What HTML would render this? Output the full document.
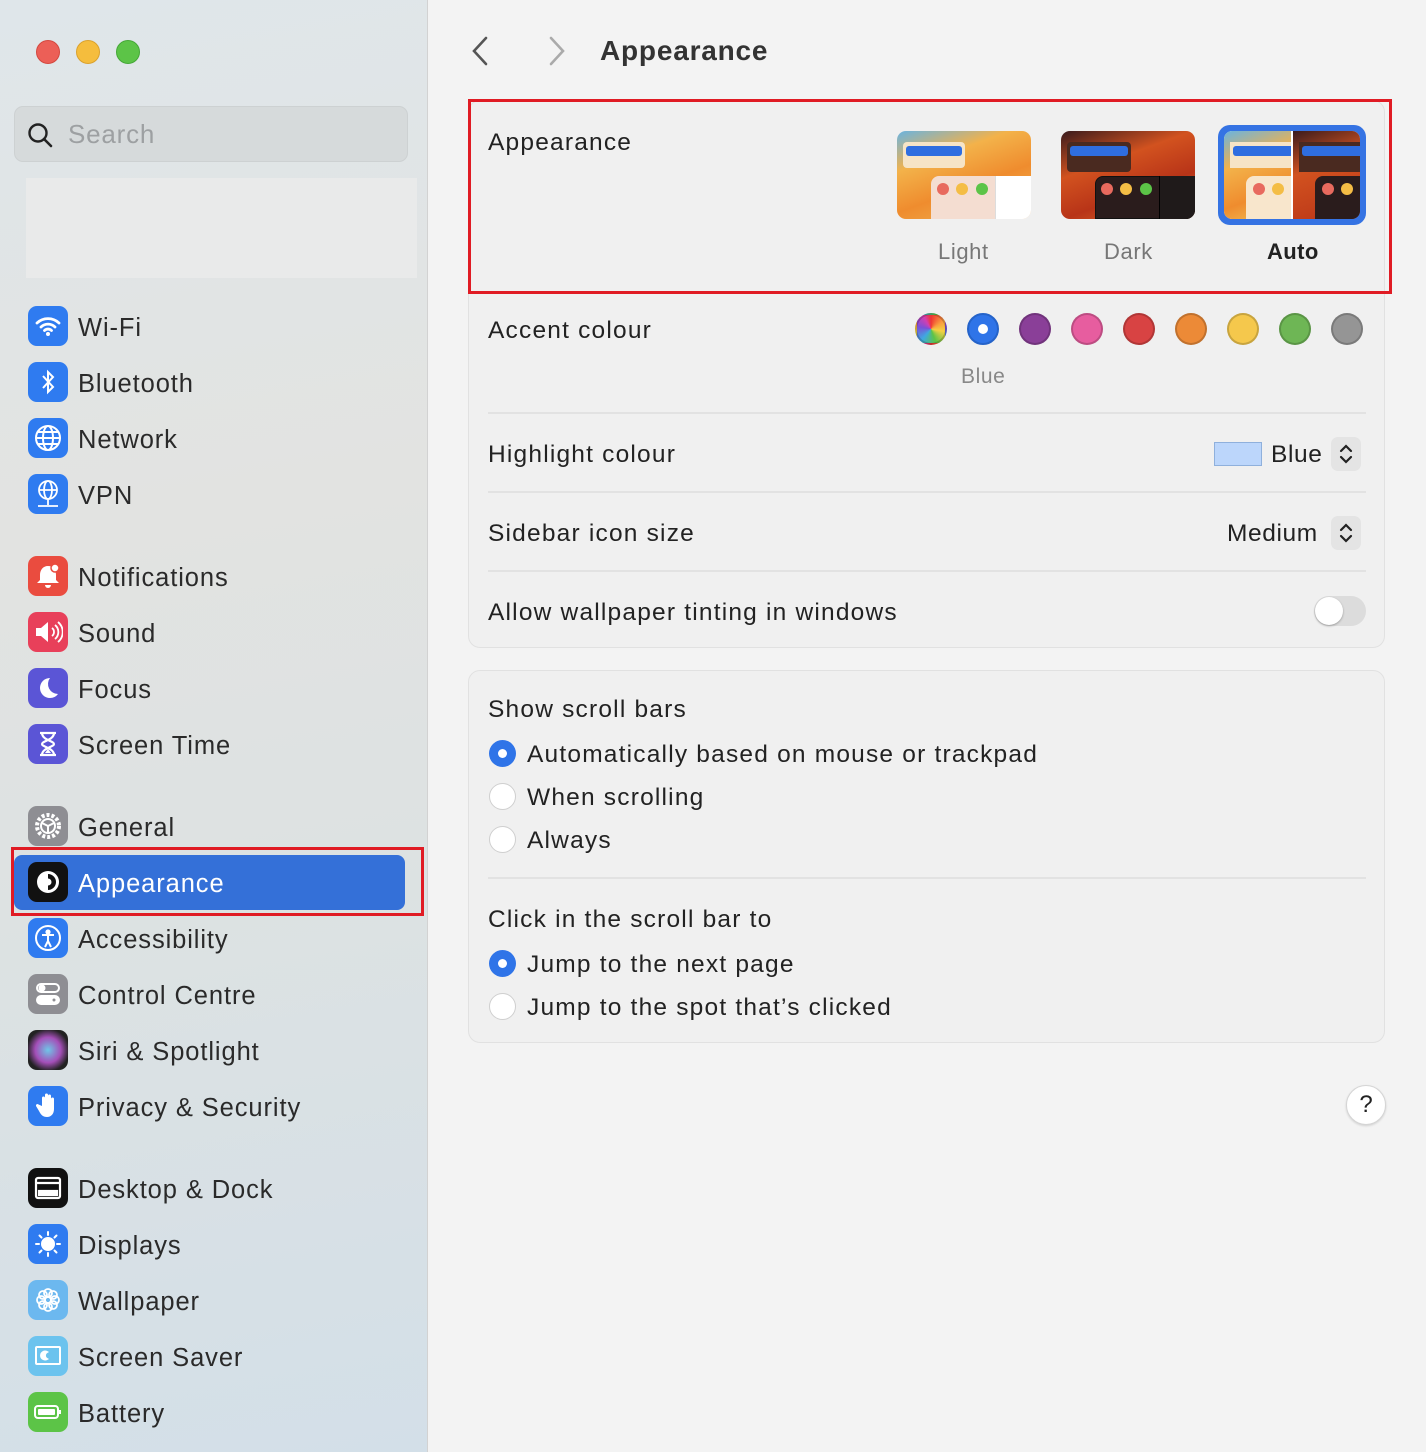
<!DOCTYPE html>
<html><head><meta charset="utf-8"><style>
*{margin:0;padding:0;box-sizing:border-box}
body{width:1426px;height:1452px;position:relative;overflow:hidden;font-family:"Liberation Sans",sans-serif;background:#f3f3f3;color:#222}
.a{position:absolute}
#side{left:0;top:0;width:428px;height:1452px;background:linear-gradient(170deg,#dfe6ea 0%,#e2e3e1 35%,#dde2e2 60%,#d3dfe8 100%);border-right:1px solid #d2d2d2}
.tl{width:24px;height:24px;border-radius:50%;top:40px}
.it{left:28px;width:40px;height:40px;border-radius:9px;display:flex;align-items:center;justify-content:center}
.lb{left:78px;font-size:25.5px;color:#2a2a2a;line-height:30px;letter-spacing:0.9px;margin-top:2px}
.t{font-size:24.5px;color:#222;line-height:30px;letter-spacing:1.2px;margin-top:2px}
.sep{height:2px;background:#e2e2e2;left:488px;width:878px}
.card{left:468px;width:917px;background:#f0f0f0;border:1px solid #e1e1e1;border-radius:12px}
.dot{width:32px;height:32px;border-radius:50%;top:313px;border:2px solid rgba(0,0,0,.18)}
.rad{left:489px;width:27px;height:27px;border-radius:50%;background:#fff;border:1px solid #cfcfcf}
.rad.on{background:#2f74e8;border:none}
.rad.on::after{content:"";position:absolute;left:9px;top:9px;width:9px;height:9px;border-radius:50%;background:#fff}
.step{width:30px;height:34px;border-radius:7px;background:#e4e4e4;display:flex;align-items:center;justify-content:center}
</style></head><body>
<div id="side" class="a"></div>
<div class="a tl" style="left:36px;background:#ec5f57;border:1px solid #d4483f"></div>
<div class="a tl" style="left:76px;background:#f5bd3d;border:1px solid #dba22d"></div>
<div class="a tl" style="left:116px;background:#5cc447;border:1px solid #45a837"></div>
<div class="a" style="left:14px;top:106px;width:394px;height:56px;border-radius:9px;background:#d6dadb;border:1px solid #cdd1d2"></div>
<svg class="a" style="left:26px;top:121px" width="28" height="28" viewBox="0 0 28 28"><circle cx="12" cy="12" r="8.5" fill="none" stroke="#222" stroke-width="2.4"/><path d="M18 18l7 7" stroke="#222" stroke-width="2.6" stroke-linecap="round"/></svg>
<div class="a" style="left:68px;top:119px;font-size:26px;color:#9da0a2;letter-spacing:0.8px">Search</div>
<div class="a" style="left:26px;top:178px;width:391px;height:100px;background:#e9eaea"></div>

<div class="a it" style="top:306px;background:#2f7bf0"><svg width="28" height="24" viewBox="0 0 28 24"><path d="M3 9a16 16 0 0122 0M7 13a10 10 0 0114 0M10.5 16.5a5 5 0 017 0" stroke="#fff" stroke-width="2.8" fill="none" stroke-linecap="round"/><circle cx="14" cy="20" r="2" fill="#fff"/></svg></div>
<div class="a lb" style="top:311px">Wi-Fi</div>
<div class="a it" style="top:362px;background:#2f7bf0"><svg width="20" height="26" viewBox="0 0 20 26"><path d="M5 7l10 11-5 5V3l5 5L5 19" stroke="#fff" stroke-width="2" fill="none"/></svg></div>
<div class="a lb" style="top:367px">Bluetooth</div>
<div class="a it" style="top:418px;background:#2f7bf0"><svg width="30" height="30" viewBox="0 0 30 30" fill="none" stroke="#fff" stroke-width="2"><circle cx="15" cy="15" r="12"/><ellipse cx="15" cy="15" rx="5" ry="12"/><path d="M3 15h24M5 9h20M5 21h20"/></svg></div>
<div class="a lb" style="top:423px">Network</div>
<div class="a it" style="top:474px;background:#2f7bf0"><svg width="30" height="32" viewBox="0 0 30 32" fill="none" stroke="#fff" stroke-width="1.8"><circle cx="15" cy="12" r="9"/><ellipse cx="15" cy="12" rx="4" ry="9"/><path d="M6 12h18M15 21v6M5 28h20"/></svg></div>
<div class="a lb" style="top:479px">VPN</div>

<div class="a it" style="top:556px;background:#ea4c3f"><svg width="28" height="28" viewBox="0 0 28 28"><path d="M14 4c-5 0-8 4-8 9v5l-3 3h22l-3-3v-5c0-5-3-9-8-9z" fill="#fff"/><circle cx="21" cy="6" r="4" fill="#fff" stroke="#ea4c3f" stroke-width="1.5"/><path d="M11 23a3 3 0 006 0" fill="#fff"/></svg></div>
<div class="a lb" style="top:561px">Notifications</div>
<div class="a it" style="top:612px;background:#e8405a"><svg width="30" height="26" viewBox="0 0 30 26"><path d="M3 9h5l7-6v20l-7-6H3z" fill="#fff"/><path d="M19 9a5 5 0 010 8M22 6a9 9 0 010 14M25 3a13 13 0 010 20" stroke="#fff" stroke-width="1.8" fill="none"/></svg></div>
<div class="a lb" style="top:617px">Sound</div>
<div class="a it" style="top:668px;background:#5b55d6"><svg width="26" height="26" viewBox="0 0 26 26"><path d="M15 3a10 10 0 100 20 10 10 0 008-4A10 10 0 0115 3z" fill="#fff"/></svg></div>
<div class="a lb" style="top:673px">Focus</div>
<div class="a it" style="top:724px;background:#5b55d6"><svg width="22" height="28" viewBox="0 0 22 28"><path d="M3 3h16M3 25h16M5 3c0 7 12 8 12 11S5 18 5 25h12c0-7-12-8-12-11S17 10 17 3" stroke="#fff" stroke-width="2.2" fill="none"/><path d="M8 23l3-4 3 4z" fill="#fff"/></svg></div>
<div class="a lb" style="top:729px">Screen Time</div>

<div class="a it" style="top:806px;background:#8e8e93"><svg width="32" height="32" viewBox="0 0 32 32" fill="none" stroke="#fff" stroke-width="2"><circle cx="16" cy="16" r="11" stroke-dasharray="3 2" stroke-width="4"/><circle cx="16" cy="16" r="7"/><path d="M16 16l-6-3M16 16l6-3M16 16v7"/></svg></div>
<div class="a lb" style="top:811px">General</div>
<div class="a" style="left:14px;top:855px;width:391px;height:55px;border-radius:8px;background:#3470d8"></div>
<div class="a" style="left:11px;top:847px;width:413px;height:69px;border:3px solid #e01b24"></div>
<div class="a it" style="top:862px;background:#111"><svg width="30" height="30" viewBox="0 0 30 30"><circle cx="15" cy="15" r="11" fill="#fff"/><path d="M15 7a8 8 0 010 16z" fill="#111"/><circle cx="15" cy="15" r="3.5" fill="#fff"/></svg></div>
<div class="a lb" style="top:867px;color:#fff">Appearance</div>
<div class="a it" style="top:918px;background:#2f7bf0"><svg width="30" height="30" viewBox="0 0 30 30" fill="none" stroke="#fff" stroke-width="2"><circle cx="15" cy="15" r="12"/><circle cx="15" cy="9" r="1.6" fill="#fff"/><path d="M9 12h12M15 12v6l-3 6M15 18l3 6"/></svg></div>
<div class="a lb" style="top:923px">Accessibility</div>
<div class="a it" style="top:974px;background:#8e8e93"><svg width="28" height="26" viewBox="0 0 28 26" fill="none" stroke="#fff" stroke-width="2"><rect x="3" y="3" width="22" height="8" rx="4"/><rect x="3" y="15" width="22" height="8" rx="4" fill="#fff"/><circle cx="8" cy="7" r="2.5" fill="#fff"/><circle cx="20" cy="19" r="2.5" fill="#8e8e93"/></svg></div>
<div class="a lb" style="top:979px">Control Centre</div>
<div class="a it" style="top:1030px;background:radial-gradient(circle,#6fc6e8 0%,#a44fb8 45%,#222 75%)"></div>
<div class="a lb" style="top:1035px">Siri &amp; Spotlight</div>
<div class="a it" style="top:1086px;background:#2f7bf0"><svg width="24" height="28" viewBox="0 0 24 28"><path d="M6 14V6a1.5 1.5 0 013 0v6V3a1.5 1.5 0 013 0v9V4a1.5 1.5 0 013 0v9V7a1.5 1.5 0 013 0v10c0 5-3 8-7 8s-6-2-8-6l-3-5a1.5 1.5 0 012.5-1.5z" fill="#fff"/></svg></div>
<div class="a lb" style="top:1091px">Privacy &amp; Security</div>

<div class="a it" style="top:1168px;background:#111"><svg width="30" height="26" viewBox="0 0 30 26" fill="none" stroke="#fff" stroke-width="2.2"><rect x="3" y="3" width="24" height="20" rx="2"/><path d="M3 8h24"/><rect x="6" y="16" width="18" height="4" fill="#fff"/></svg></div>
<div class="a lb" style="top:1173px">Desktop &amp; Dock</div>
<div class="a it" style="top:1224px;background:#2f7bf0"><svg width="30" height="30" viewBox="0 0 30 30" stroke="#fff" stroke-width="2" stroke-linecap="round"><circle cx="15" cy="15" r="6" fill="#fff"/><path d="M15 3v3M15 24v3M3 15h3M24 15h3M6.5 6.5l2 2M21.5 21.5l2 2M6.5 23.5l2-2M21.5 8.5l2-2"/></svg></div>
<div class="a lb" style="top:1229px">Displays</div>
<div class="a it" style="top:1280px;background:#6cb8ef"><svg width="30" height="30" viewBox="0 0 30 30" fill="none" stroke="#fff" stroke-width="1.8"><circle cx="15" cy="15" r="3"/><circle cx="15" cy="8" r="4"/><circle cx="15" cy="22" r="4"/><circle cx="8" cy="15" r="4"/><circle cx="22" cy="15" r="4"/><circle cx="10" cy="10" r="4"/><circle cx="20" cy="20" r="4"/><circle cx="20" cy="10" r="4"/><circle cx="10" cy="20" r="4"/></svg></div>
<div class="a lb" style="top:1285px">Wallpaper</div>
<div class="a it" style="top:1336px;background:#6cc3ee"><svg width="30" height="24" viewBox="0 0 30 24" fill="none" stroke="#fff" stroke-width="2"><rect x="3" y="3" width="24" height="17" rx="1"/><path d="M14 8a4 4 0 100 7 4 4 0 01-0-7z" fill="#fff"/></svg></div>
<div class="a lb" style="top:1341px">Screen Saver</div>
<div class="a it" style="top:1392px;background:#5cc447"><svg width="30" height="18" viewBox="0 0 30 18"><rect x="2" y="3" width="23" height="12" rx="3" fill="none" stroke="#fff" stroke-width="2"/><rect x="5" y="6" width="17" height="6" rx="1" fill="#fff"/><rect x="26" y="7" width="2" height="4" fill="#fff"/></svg></div>
<div class="a lb" style="top:1397px">Battery</div>

<svg class="a" style="left:468px;top:34px" width="24" height="34" viewBox="0 0 24 34"><path d="M18 4L6 17l12 13" stroke="#555" stroke-width="2.6" fill="none" stroke-linecap="round"/></svg>
<svg class="a" style="left:545px;top:34px" width="24" height="34" viewBox="0 0 24 34"><path d="M6 4l12 13L6 30" stroke="#aaa" stroke-width="2.6" fill="none" stroke-linecap="round"/></svg>
<div class="a" style="left:600px;top:35px;font-size:28px;font-weight:bold;color:#333;letter-spacing:0.8px">Appearance</div>

<div class="a card" style="top:100px;height:548px"></div>
<div class="a t" style="left:488px;top:126px">Appearance</div>
<div class="a" style="left:897px;top:131px;width:134px;height:88px;border-radius:9px;overflow:hidden;background:linear-gradient(160deg,#6ab3e0 0%,#f3b24a 30%,#ef8c2e 60%,#f0b856 100%)">
 <div class="a" style="left:6px;top:11px;width:62px;height:26px;border-radius:4px;background:#f6e4c6"><div class="a" style="left:3px;top:4px;width:56px;height:10px;border-radius:3px;background:#2f6ee0"></div></div>
 <div class="a" style="left:34px;top:45px;width:100px;height:43px;border-radius:8px 0 0 0;background:#f4ddd1"></div>
 <div class="a" style="left:98px;top:45px;width:36px;height:43px;background:#fff;border-left:1px solid #ddd"></div>
 <div class="a" style="left:40px;top:52px;width:12px;height:12px;border-radius:50%;background:#e86a5e"></div>
 <div class="a" style="left:59px;top:52px;width:12px;height:12px;border-radius:50%;background:#f4bd45"></div>
 <div class="a" style="left:79px;top:52px;width:12px;height:12px;border-radius:50%;background:#5cc447"></div>
</div>
<div class="a" style="left:1061px;top:131px;width:134px;height:88px;border-radius:9px;overflow:hidden;background:linear-gradient(160deg,#3a1b1e 0%,#d2521f 35%,#b83418 65%,#e2762a 100%)">
 <div class="a" style="left:6px;top:11px;width:64px;height:30px;border-radius:4px;background:#4a2a20"><div class="a" style="left:3px;top:4px;width:58px;height:10px;border-radius:3px;background:#2f6ee0"></div></div>
 <div class="a" style="left:34px;top:45px;width:100px;height:43px;border-radius:8px 0 0 0;background:#2a1c1c;border:1px solid #111"></div>
 <div class="a" style="left:98px;top:45px;width:36px;height:43px;background:#1f1a1a;border-left:1px solid #000"></div>
 <div class="a" style="left:40px;top:52px;width:12px;height:12px;border-radius:50%;background:#e86a5e"></div>
 <div class="a" style="left:59px;top:52px;width:12px;height:12px;border-radius:50%;background:#f4bd45"></div>
 <div class="a" style="left:79px;top:52px;width:12px;height:12px;border-radius:50%;background:#5cc447"></div>
</div>
<div class="a" style="left:1218px;top:125px;width:148px;height:100px;border-radius:12px;background:#3573e3"></div>
<div class="a" style="left:1224px;top:131px;width:136px;height:88px;border-radius:8px;overflow:hidden;background:#fff">
 <div class="a" style="left:0;top:0;width:67px;height:88px;background:linear-gradient(160deg,#6ab3e0 0%,#f3b24a 35%,#ef8c2e 70%,#f0c45a 100%)">
  <div class="a" style="left:6px;top:11px;width:61px;height:26px;background:#f6e4c6"><div class="a" style="left:3px;top:4px;width:58px;height:10px;border-radius:3px 0 0 3px;background:#2f6ee0"></div></div>
  <div class="a" style="left:22px;top:45px;width:45px;height:43px;border-radius:8px 0 0 0;background:#f8e6cc"></div>
  <div class="a" style="left:29px;top:52px;width:12px;height:12px;border-radius:50%;background:#e86a5e"></div>
  <div class="a" style="left:48px;top:52px;width:12px;height:12px;border-radius:50%;background:#f4bd45"></div>
 </div>
 <div class="a" style="left:69px;top:0;width:67px;height:88px;background:linear-gradient(160deg,#3a1b1e 0%,#d2521f 40%,#b83418 100%)">
  <div class="a" style="left:6px;top:11px;width:61px;height:30px;background:#4a2a20"><div class="a" style="left:3px;top:4px;width:58px;height:10px;border-radius:3px 0 0 3px;background:#2f6ee0"></div></div>
  <div class="a" style="left:22px;top:45px;width:45px;height:43px;border-radius:8px 0 0 0;background:#2a1c1c"></div>
  <div class="a" style="left:29px;top:52px;width:12px;height:12px;border-radius:50%;background:#e86a5e"></div>
  <div class="a" style="left:48px;top:52px;width:12px;height:12px;border-radius:50%;background:#f4bd45"></div>
 </div>
</div>
<div class="a" style="left:938px;top:239px;font-size:22px;color:#777;letter-spacing:0.6px">Light</div>
<div class="a" style="left:1104px;top:239px;font-size:22px;color:#777;letter-spacing:0.6px">Dark</div>
<div class="a" style="left:1267px;top:239px;font-size:22px;font-weight:bold;color:#222;letter-spacing:0.4px">Auto</div>
<div class="a" style="left:468px;top:99px;width:924px;height:195px;border:3px solid #e01b24"></div>

<div class="a t" style="left:488px;top:314px">Accent colour</div>
<div class="a dot" style="left:915px;background:conic-gradient(#e33 0deg,#f9a03f 60deg,#f5d142 100deg,#5cc447 160deg,#3fa9e0 220deg,#7b4fd8 280deg,#d33fb0 330deg,#e33 360deg)"></div>
<div class="a dot" style="left:967px;background:#2f74e8;border-color:#2563c9"><div class="a" style="left:9px;top:9px;width:10px;height:10px;border-radius:50%;background:#fff"></div></div>
<div class="a dot" style="left:1019px;background:#8a3f98"></div>
<div class="a dot" style="left:1071px;background:#e75d9f"></div>
<div class="a dot" style="left:1123px;background:#d84343"></div>
<div class="a dot" style="left:1175px;background:#ec8a37"></div>
<div class="a dot" style="left:1227px;background:#f5c84c"></div>
<div class="a dot" style="left:1279px;background:#6eb655"></div>
<div class="a dot" style="left:1331px;background:#959595"></div>
<div class="a" style="left:961px;top:365px;font-size:21px;color:#888;letter-spacing:0.6px">Blue</div>
<div class="a sep" style="top:412px"></div>
<div class="a t" style="left:488px;top:438px">Highlight colour</div>
<div class="a" style="left:1214px;top:442px;width:48px;height:24px;background:#bcd6fb;border:1px solid #8fb0dc"></div>
<div class="a t" style="left:1271px;top:438px;letter-spacing:0.6px">Blue</div>
<div class="a step" style="left:1331px;top:437px"><svg width="16" height="26" viewBox="0 0 16 26" fill="none" stroke="#222" stroke-width="2.2" stroke-linecap="round"><path d="M3 10l5-5 5 5M3 16l5 5 5-5"/></svg></div>
<div class="a sep" style="top:491px"></div>
<div class="a t" style="left:488px;top:517px">Sidebar icon size</div>
<div class="a t" style="left:1227px;top:517px;letter-spacing:0.6px">Medium</div>
<div class="a step" style="left:1331px;top:516px"><svg width="16" height="26" viewBox="0 0 16 26" fill="none" stroke="#222" stroke-width="2.2" stroke-linecap="round"><path d="M3 10l5-5 5 5M3 16l5 5 5-5"/></svg></div>
<div class="a sep" style="top:570px"></div>
<div class="a t" style="left:488px;top:596px">Allow wallpaper tinting in windows</div>
<div class="a" style="left:1314px;top:596px;width:52px;height:30px;border-radius:15px;background:#dcdcdc"><div class="a" style="left:1px;top:1px;width:28px;height:28px;border-radius:50%;background:#fff;box-shadow:0 1px 2px rgba(0,0,0,.3)"></div></div>

<div class="a card" style="top:670px;height:373px"></div>
<div class="a t" style="left:488px;top:693px">Show scroll bars</div>
<div class="a rad on" style="top:740px"></div><div class="a t" style="left:527px;top:738px">Automatically based on mouse or trackpad</div>
<div class="a rad" style="top:783px"></div><div class="a t" style="left:527px;top:781px">When scrolling</div>
<div class="a rad" style="top:826px"></div><div class="a t" style="left:527px;top:824px">Always</div>
<div class="a sep" style="top:877px"></div>
<div class="a t" style="left:488px;top:903px">Click in the scroll bar to</div>
<div class="a rad on" style="top:950px"></div><div class="a t" style="left:527px;top:948px">Jump to the next page</div>
<div class="a rad" style="top:993px"></div><div class="a t" style="left:527px;top:991px">Jump to the spot that’s clicked</div>

<div class="a" style="left:1346px;top:1085px;width:40px;height:40px;border-radius:50%;background:#fff;border:1px solid #d5d5d5;box-shadow:0 1px 2px rgba(0,0,0,.15);text-align:center;line-height:38px;font-size:24px;color:#222">?</div>
</body></html>
